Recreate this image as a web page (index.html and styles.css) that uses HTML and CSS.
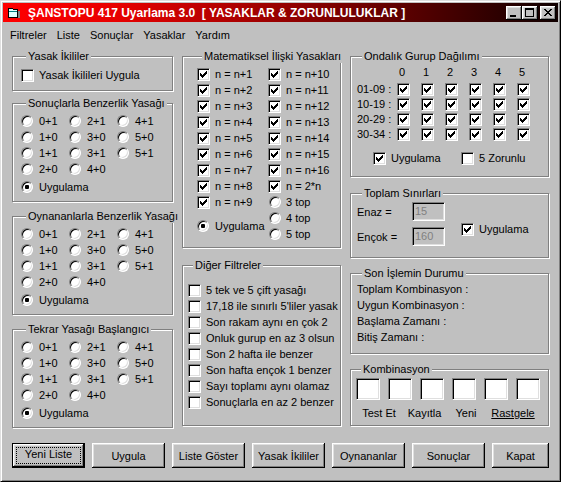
FILE: index.html
```html
<!DOCTYPE html>
<html lang="tr">
<head>
    <meta charset="UTF-8">
    <title>ŞANSTOPU 417 Uyarlama 3.0 [ YASAKLAR &amp; ZORUNLULUKLAR ]</title>
    <link rel="stylesheet" href="styles.css">
</head>
<body>
    <!-- ortak çizimler: onay işareti -->
    <svg class="defs" width="0" height="0">
        <symbol id="tick" viewBox="0 0 7 7">
            <path d="M0 2h1v3H0z M1 3h1v3H1z M2 4h1v3H2z M3 3h1v3H3z M4 2h1v3H4z M5 1h1v3H5z M6 0h1v3H6z"/>
        </symbol>
    </svg>

    <div class="window">
        <div class="titlebar">
            <svg class="app-icon" width="16" height="16" viewBox="0 0 16 16">
                <path d="M13 6h2v7h-2z" fill="#808080"/>
                <path d="M3.5 3.5h4l1 1h4v8h-9z" fill="#e0ffff" stroke="#000"/>
                <path d="M4 6h8" stroke="#008080"/>
            </svg>
            <span class="title-text">ŞANSTOPU 417 Uyarlama 3.0&nbsp; [ YASAKLAR &amp; ZORUNLULUKLAR ]</span>
            <div class="caption-btns">
                <span class="cap-btn"><svg width="16" height="14" viewBox="0 0 16 14"><path d="M4 9h6v2H4z"/></svg></span>
                <span class="cap-btn"><svg width="16" height="14" viewBox="0 0 16 14"><path d="M3 2h9v9H3z M4 4v6h7V4z" fill-rule="evenodd"/></svg></span>
                <span class="cap-btn close"><svg width="16" height="14" viewBox="0 0 16 14"><path d="M4 3h2v1H4z M10 3h2v1h-2z M5 4h2v1H5z M9 4h2v1H9z M6 5h4v1H6z M7 6h2v1H7z M6 7h4v1H6z M5 8h2v1H5z M9 8h2v1H9z M4 9h2v1H4z M10 9h2v1h-2z"/></svg></span>
            </div>
        </div>

        <div class="menubar">
            <span>Filtreler</span>
            <span>Liste</span>
            <span>Sonuçlar</span>
            <span>Yasaklar</span>
            <span>Yardım</span>
        </div>

        <div class="columns">
            <!-- sol sütun -->
            <div class="col">
                <div class="group g-ikili">
                    <div class="gtitle">Yasak İkililer</div>
                    <label class="opt first"><span class="check"></span>Yasak İkilileri Uygula</label>
                </div>

                <div class="group g-radio g-sonuc">
                    <div class="gtitle">Sonuçlarla Benzerlik Yasağı</div>
                    <div class="radio-grid">
                        <label class="opt"><span class="radio"></span>0+1</label>
                        <label class="opt"><span class="radio"></span>2+1</label>
                        <label class="opt"><span class="radio"></span>4+1</label>
                        <label class="opt"><span class="radio"></span>1+0</label>
                        <label class="opt"><span class="radio"></span>3+0</label>
                        <label class="opt"><span class="radio"></span>5+0</label>
                        <label class="opt"><span class="radio"></span>1+1</label>
                        <label class="opt"><span class="radio"></span>3+1</label>
                        <label class="opt"><span class="radio"></span>5+1</label>
                        <label class="opt"><span class="radio"></span>2+0</label>
                        <label class="opt"><span class="radio"></span>4+0</label>
                    </div>
                    <label class="opt apply"><span class="radio on"></span>Uygulama</label>
                </div>

                <div class="group g-radio g-oyn">
                    <div class="gtitle">Oynananlarla Benzerlik Yasağı</div>
                    <div class="radio-grid">
                        <label class="opt"><span class="radio"></span>0+1</label>
                        <label class="opt"><span class="radio"></span>2+1</label>
                        <label class="opt"><span class="radio"></span>4+1</label>
                        <label class="opt"><span class="radio"></span>1+0</label>
                        <label class="opt"><span class="radio"></span>3+0</label>
                        <label class="opt"><span class="radio"></span>5+0</label>
                        <label class="opt"><span class="radio"></span>1+1</label>
                        <label class="opt"><span class="radio"></span>3+1</label>
                        <label class="opt"><span class="radio"></span>5+1</label>
                        <label class="opt"><span class="radio"></span>2+0</label>
                        <label class="opt"><span class="radio"></span>4+0</label>
                    </div>
                    <label class="opt apply"><span class="radio on"></span>Uygulama</label>
                </div>

                <div class="group g-radio g-tekrar">
                    <div class="gtitle">Tekrar Yasağı Başlangıcı</div>
                    <div class="radio-grid">
                        <label class="opt"><span class="radio"></span>0+1</label>
                        <label class="opt"><span class="radio"></span>2+1</label>
                        <label class="opt"><span class="radio"></span>4+1</label>
                        <label class="opt"><span class="radio"></span>1+0</label>
                        <label class="opt"><span class="radio"></span>3+0</label>
                        <label class="opt"><span class="radio"></span>5+0</label>
                        <label class="opt"><span class="radio"></span>1+1</label>
                        <label class="opt"><span class="radio"></span>3+1</label>
                        <label class="opt"><span class="radio"></span>5+1</label>
                        <label class="opt"><span class="radio"></span>2+0</label>
                        <label class="opt"><span class="radio"></span>4+0</label>
                    </div>
                    <label class="opt apply"><span class="radio on"></span>Uygulama</label>
                </div>
            </div>

            <!-- orta sütun -->
            <div class="col">
                <div class="group g-mat">
                    <div class="gtitle">Matematiksel İlişki Yasakları</div>
                    <div class="mat-grid">
                        <label class="opt"><span class="check"><svg><use href="#tick"/></svg></span>n = n+1</label>
                        <label class="opt"><span class="check"><svg><use href="#tick"/></svg></span>n = n+2</label>
                        <label class="opt"><span class="check"><svg><use href="#tick"/></svg></span>n = n+3</label>
                        <label class="opt"><span class="check"><svg><use href="#tick"/></svg></span>n = n+4</label>
                        <label class="opt"><span class="check"><svg><use href="#tick"/></svg></span>n = n+5</label>
                        <label class="opt"><span class="check"><svg><use href="#tick"/></svg></span>n = n+6</label>
                        <label class="opt"><span class="check"><svg><use href="#tick"/></svg></span>n = n+7</label>
                        <label class="opt"><span class="check"><svg><use href="#tick"/></svg></span>n = n+8</label>
                        <label class="opt"><span class="check"><svg><use href="#tick"/></svg></span>n = n+9</label>
                        <label class="opt span2"><span class="radio on"></span>Uygulama</label>
                        <label class="opt"><span class="check"><svg><use href="#tick"/></svg></span>n = n+10</label>
                        <label class="opt"><span class="check"><svg><use href="#tick"/></svg></span>n = n+11</label>
                        <label class="opt"><span class="check"><svg><use href="#tick"/></svg></span>n = n+12</label>
                        <label class="opt"><span class="check"><svg><use href="#tick"/></svg></span>n = n+13</label>
                        <label class="opt"><span class="check"><svg><use href="#tick"/></svg></span>n = n+14</label>
                        <label class="opt"><span class="check"><svg><use href="#tick"/></svg></span>n = n+15</label>
                        <label class="opt"><span class="check"><svg><use href="#tick"/></svg></span>n = n+16</label>
                        <label class="opt"><span class="check"><svg><use href="#tick"/></svg></span>n = 2*n</label>
                        <label class="opt top"><span class="radio"></span>3 top</label>
                        <label class="opt top"><span class="radio"></span>4 top</label>
                        <label class="opt top"><span class="radio"></span>5 top</label>
                    </div>
                </div>

                <div class="group g-diger">
                    <div class="gtitle">Diğer Filtreler</div>
                    <div class="list">
                        <label class="opt"><span class="check"></span>5 tek ve 5 çift yasağı</label>
                        <label class="opt"><span class="check"></span>17,18 ile sınırlı 5'liler yasak</label>
                        <label class="opt"><span class="check"></span>Son rakam aynı en çok 2</label>
                        <label class="opt"><span class="check"></span>Onluk gurup en az 3 olsun</label>
                        <label class="opt"><span class="check"></span>Son 2 hafta ile benzer</label>
                        <label class="opt"><span class="check"></span>Son hafta ençok 1 benzer</label>
                        <label class="opt"><span class="check"></span>Sayı toplamı aynı olamaz</label>
                        <label class="opt"><span class="check"></span>Sonuçlarla en az 2 benzer</label>
                    </div>
                </div>
            </div>

            <!-- sağ sütun -->
            <div class="col">
                <div class="group g-ondalik">
                    <div class="gtitle">Ondalık Gurup Dağılımı</div>
                    <div class="ond-grid">
                        <span></span><span class="digit">0</span><span class="digit">1</span><span class="digit">2</span><span class="digit">3</span><span class="digit">4</span><span class="digit">5</span>
                        <span class="rowlbl">01-09 :</span>
                        <span class="check"><svg><use href="#tick"/></svg></span><span class="check"><svg><use href="#tick"/></svg></span><span class="check"><svg><use href="#tick"/></svg></span><span class="check"><svg><use href="#tick"/></svg></span><span class="check"><svg><use href="#tick"/></svg></span><span class="check"><svg><use href="#tick"/></svg></span>
                        <span class="rowlbl">10-19 :</span>
                        <span class="check"><svg><use href="#tick"/></svg></span><span class="check"><svg><use href="#tick"/></svg></span><span class="check"><svg><use href="#tick"/></svg></span><span class="check"><svg><use href="#tick"/></svg></span><span class="check"><svg><use href="#tick"/></svg></span><span class="check"><svg><use href="#tick"/></svg></span>
                        <span class="rowlbl">20-29 :</span>
                        <span class="check"><svg><use href="#tick"/></svg></span><span class="check"><svg><use href="#tick"/></svg></span><span class="check"><svg><use href="#tick"/></svg></span><span class="check"><svg><use href="#tick"/></svg></span><span class="check"><svg><use href="#tick"/></svg></span><span class="check"><svg><use href="#tick"/></svg></span>
                        <span class="rowlbl">30-34 :</span>
                        <span class="check"><svg><use href="#tick"/></svg></span><span class="check"><svg><use href="#tick"/></svg></span><span class="check"><svg><use href="#tick"/></svg></span><span class="check"><svg><use href="#tick"/></svg></span><span class="check"><svg><use href="#tick"/></svg></span><span class="check"><svg><use href="#tick"/></svg></span>
                    </div>
                    <div class="ond-foot">
                        <label class="opt ond-apply"><span class="check"><svg><use href="#tick"/></svg></span>Uygulama</label>
                        <label class="opt"><span class="check"></span>5 Zorunlu</label>
                    </div>
                </div>

                <div class="group g-toplam">
                    <div class="gtitle">Toplam Sınırları</div>
                    <div class="toplam-row">
                        <div class="limits">
                            <span>Enaz =</span><span class="field disabled">15</span>
                            <span>Ençok =</span><span class="field disabled">160</span>
                        </div>
                        <label class="opt toplam-apply"><span class="check"><svg><use href="#tick"/></svg></span>Uygulama</label>
                    </div>
                </div>

                <div class="group g-durum">
                    <div class="gtitle">Son İşlemin Durumu</div>
                    <div class="status-lines">
                        <div>Toplam Kombinasyon :</div>
                        <div>Uygun Kombinasyon :</div>
                        <div>Başlama Zamanı :</div>
                        <div>Bitiş Zamanı :</div>
                    </div>
                </div>

                <div class="group g-komb">
                    <div class="gtitle">Kombinasyon</div>
                    <div class="komb-boxes">
                        <span class="field"></span><span class="field"></span><span class="field"></span>
                        <span class="field"></span><span class="field"></span><span class="field"></span>
                    </div>
                    <div class="komb-links">
                        <span>Test Et</span>
                        <span>Kayıtla</span>
                        <span>Yeni</span>
                        <span class="underline">Rastgele</span>
                    </div>
                </div>
            </div>
        </div>

        <div class="buttons">
            <button class="btn default"><span>Yeni Liste</span></button>
            <button class="btn">Uygula</button>
            <button class="btn">Liste Göster</button>
            <button class="btn">Yasak İkililer</button>
            <button class="btn">Oynananlar</button>
            <button class="btn">Sonuçlar</button>
            <button class="btn narrow">Kapat</button>
        </div>
    </div>
</body>
</html>
```

FILE: styles.css
```css
body {
    margin: 0;
    font-family: "Liberation Sans", Arial, sans-serif;
    font-size: 11px;
    color: #000;
    background: #c0c0c0;
}
.defs {
    position: absolute;
}

/* pencere çerçevesi */
.window {
    width: 561px;
    height: 482px;
    box-sizing: border-box;
    background: #c0c0c0;
    border: 1px solid;
    border-color: #dfdfdf #000 #000 #dfdfdf;
    box-shadow: inset 1px 1px #fff, inset -1px -1px #808080;
    padding: 2px;
}
.titlebar {
    height: 19px;
    display: flex;
    align-items: center;
    padding: 0 2px;
    background: linear-gradient(to right, #ff0000 0%, #e80000 20%, #100000 100%);
    color: #fff;
    font-weight: bold;
    font-size: 12px;
}
.app-icon {
    display: block;
    shape-rendering: crispEdges;
}
.title-text {
    margin-left: 7px;
    white-space: nowrap;
}
.caption-btns {
    margin-left: auto;
    display: flex;
}
.cap-btn {
    width: 16px;
    height: 14px;
    background: #c0c0c0;
    box-shadow: inset -1px -1px #000, inset 1px 1px #fff, inset -2px -2px #808080, inset 2px 2px #dfdfdf;
}
.cap-btn svg {
    display: block;
    shape-rendering: crispEdges;
}
.cap-btn.close {
    margin-left: 2px;
}

.menubar {
    height: 21px;
    box-sizing: border-box;
    padding: 5px 0 0 2px;
    line-height: 16px;
    display: flex;
}
.menubar span {
    padding: 0 5px;
}

/* üç sütunlu içerik */
.columns {
    display: grid;
    grid-template-columns: 161px 159px 199px;
    column-gap: 9px;
    height: 372px;
    margin-top: 13px;
    padding-left: 9px;
}
.col {
    display: flex;
    flex-direction: column;
}

.group {
    box-sizing: border-box;
    border: 1px solid #808080;
    box-shadow: inset 1px 1px #fff, 1px 1px #fff;
}
.gtitle {
    width: fit-content;
    margin: -7px 0 0 5px;
    padding: 0 2px;
    line-height: 13px;
    background: #c0c0c0;
    white-space: nowrap;
}

.opt {
    display: flex;
    align-items: center;
    height: 16px;
    white-space: nowrap;
}

.check {
    display: inline-block;
    flex: none;
    width: 13px;
    height: 13px;
    box-sizing: border-box;
    margin-right: 5px;
    background: #fff;
    border: 1px solid;
    border-color: #808080 #fff #fff #808080;
    box-shadow: inset 1px 1px #000, inset -1px -1px #dfdfdf;
}
.check svg {
    display: block;
    width: 7px;
    height: 7px;
    margin: 2px;
    shape-rendering: crispEdges;
}

.radio {
    position: relative;
    flex: none;
    width: 12px;
    height: 12px;
    box-sizing: border-box;
    margin-right: 6px;
    border-radius: 50%;
    background: #fff;
    border: 1px solid;
    border-color: #808080 #fff #fff #808080;
    box-shadow: inset 1px 1px #000, inset -1px -1px #dfdfdf;
}
.radio.on::after {
    content: "";
    position: absolute;
    left: 3px;
    top: 3px;
    width: 4px;
    height: 4px;
    border-radius: 1px;
    background: #000;
}

/* sol sütun kutuları */
.g-ikili {
    height: 35px;
    padding-left: 8px;
}
.g-ikili .first {
    margin-top: 4px;
}
.g-radio {
    height: 99px;
    padding-left: 8px;
}
.g-sonuc {
    margin-top: 12px;
}
.g-oyn,
.g-tekrar {
    margin-top: 14px;
}
.radio-grid {
    display: grid;
    grid-template-columns: 48px 48px 48px;
    grid-auto-rows: 16px;
    margin-top: 3px;
}
.apply {
    margin-top: 2px;
}

/* orta sütun */
.g-mat {
    height: 192px;
    padding-left: 14px;
}
.mat-grid {
    display: grid;
    grid-template-columns: 71px auto;
    grid-template-rows: repeat(11, 16px);
    grid-auto-flow: column;
    margin-top: 3px;
}
.mat-grid .span2 {
    grid-row: span 2;
    align-self: center;
}
.mat-grid .top .radio {
    margin-left: 1px;
    margin-right: 5px;
}
.g-diger {
    height: 161px;
    margin-top: 17px;
    padding-left: 5px;
}
.list {
    margin-top: 10px;
}

/* sağ sütun */
.g-ondalik {
    height: 121px;
    padding-left: 6px;
}
.ond-grid {
    display: grid;
    grid-template-columns: 40px repeat(6, 24px);
    grid-template-rows: 16px repeat(4, 15px);
    align-items: center;
    margin-top: 1px;
}
.ond-grid .digit {
    padding-left: 2px;
}
.ond-grid .rowlbl {
    white-space: nowrap;
}
.ond-grid .rowlbl,
.ond-grid .check {
    margin-top: 3px;
}
.ond-grid .check {
    margin-right: 0;
}
.ond-foot {
    display: flex;
    margin-top: 10px;
    padding-left: 16px;
}
.ond-apply {
    width: 88px;
}

.g-toplam {
    height: 65px;
    margin-top: 16px;
    padding-left: 6px;
}
.toplam-row {
    display: flex;
    margin-top: 2px;
}
.limits {
    display: grid;
    grid-template-columns: 55px 33px;
    grid-template-rows: 19px 19px;
    row-gap: 6px;
    align-items: center;
}
.toplam-apply {
    margin: 19px 0 0 16px;
}

.field {
    display: block;
    box-sizing: border-box;
    background: #fff;
    border: 1px solid;
    border-color: #808080 #fff #fff #808080;
    box-shadow: inset 1px 1px #000, inset -1px -1px #dfdfdf;
}
.field.disabled {
    height: 19px;
    padding-left: 2px;
    line-height: 17px;
    background: #c0c0c0;
    color: #808080;
}

.g-durum {
    height: 81px;
    margin-top: 15px;
    padding-left: 6px;
}
.status-lines {
    margin-top: 1px;
    line-height: 16px;
}

.g-komb {
    height: 57px;
    margin-top: 15px;
    padding-left: 5px;
}
.komb-boxes {
    display: flex;
    gap: 8px;
    margin-top: 2px;
}
.komb-boxes .field {
    width: 24px;
    height: 22px;
}
.komb-links {
    display: grid;
    grid-template-columns: 46px 45px 38px 56px;
    margin-top: 6px;
    line-height: 14px;
    text-align: center;
}
.underline {
    text-decoration: underline;
}

/* alt düğmeler */
.buttons {
    display: flex;
    gap: 7px;
    margin-top: 15px;
    padding-left: 9px;
}
.btn {
    width: 73px;
    height: 25px;
    padding: 0;
    border: none;
    background: #c0c0c0;
    font-family: inherit;
    font-size: 11px;
    color: #000;
    box-shadow: inset -1px -1px #000, inset 1px 1px #fff, inset -2px -2px #808080, inset 2px 2px #dfdfdf;
}
.btn.narrow {
    width: 57px;
}
.btn.default {
    border: 1px solid #000;
    padding: 3px;
}
.btn.default span {
    display: block;
    height: 100%;
    box-sizing: border-box;
    line-height: 15px;
    outline: 1px dotted #000;
    outline-offset: -1px;
}
```
